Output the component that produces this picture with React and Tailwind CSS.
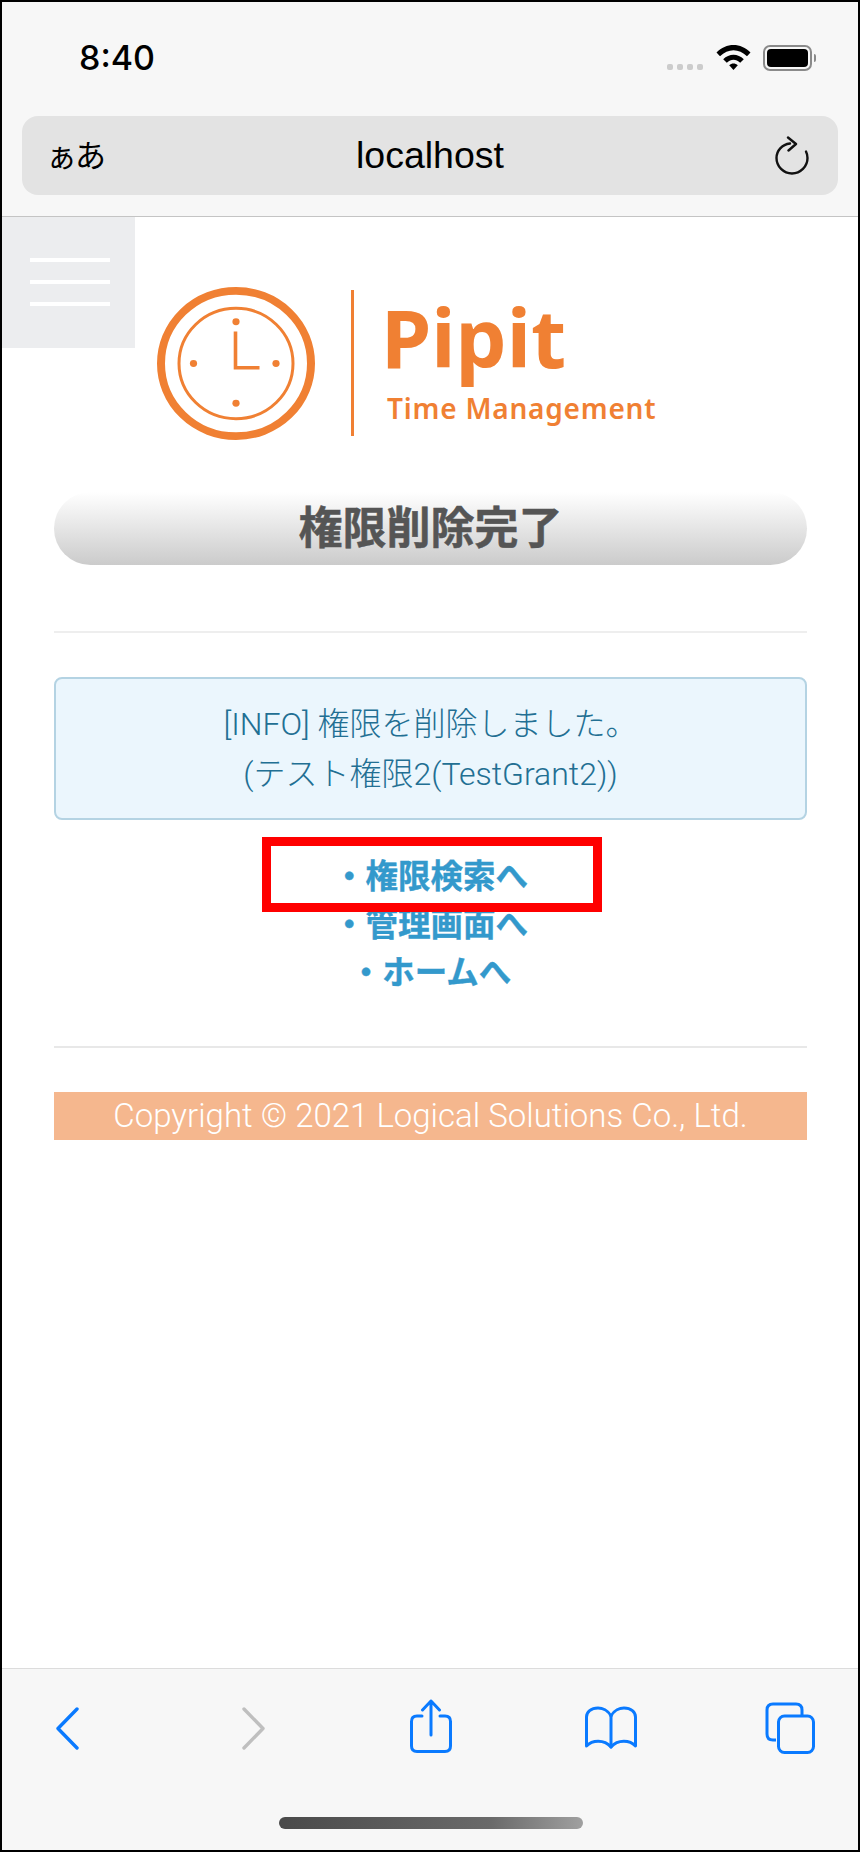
const orange = "#f08033";

function Clock() {
  return (
    <svg width="160" height="155" viewBox="0 0 160 160" preserveAspectRatio="none" className="shrink-0">
      <circle cx="80" cy="80" r="75" fill="none" stroke={orange} strokeWidth="8" />
      <circle cx="80" cy="80" r="57" fill="none" stroke={orange} strokeWidth="3" />
      <circle cx="80" cy="37" r="3.6" fill={orange} />
      <circle cx="80" cy="121" r="3.6" fill={orange} />
      <circle cx="37.5" cy="80" r="3.6" fill={orange} />
      <circle cx="120" cy="80" r="3.6" fill={orange} />
      <path d="M79.5 47V84.5H103.5" fill="none" stroke={orange} strokeWidth="3.6" />
    </svg>
  );
}

function Wifi() {
  return (
    <svg width="35" height="26" viewBox="0 0 35 26">
      <path d="M0.5 8.5C10 -1.5 25 -1.5 34.5 8.5L31 12.2C23 4.2 12 4.2 4 12.2Z" fill="#000" />
      <path d="M7.2 15.2C13 9.2 22 9.2 27.8 15.2L24.2 18.8C20 14.8 15 14.8 10.8 18.8Z" fill="#000" />
      <path d="M13.2 21.2C15.8 18.8 19.2 18.8 21.8 21.2L17.5 26Z" fill="#000" />
    </svg>
  );
}

function Battery() {
  return (
    <div className="flex items-center">
      <div className="h-[26px] w-[49px] rounded-[7px] border-2 border-[#8a8a8a] p-[2px]">
        <div className="h-full w-full rounded-[4px] bg-black" />
      </div>
      <div className="ml-[2px] h-[8px] w-[2px] rounded-r-full bg-[#8a8a8a]" />
    </div>
  );
}

function Reload() {
  return (
    <svg width="34" height="39" viewBox="0 0 34 39" fill="none" stroke="#111" strokeWidth="2.4" strokeLinecap="round" strokeLinejoin="round">
      <path d="M15 7.5C7 8.5 1.500 14.500 1.500 22C1.500 30.500 8.500 37.500 17 37.500C25.500 37.500 32.500 30.500 32.500 22C32.500 19.500 32 17.500 31 15.500" />
      <path d="M13 1.500L21 8L13.500 14.500" />
    </svg>
  );
}

function Toolbar() {
  const blue = "#0a7aff";
  return (
    <div className="flex h-[182px] flex-col border-t border-[#dcdcdc] bg-[#f7f7f7]">
      <div className="relative h-[148px]">
        <svg className="absolute left-[53px] top-[38px]" width="26" height="43" viewBox="0 0 26 43" fill="none" stroke={blue} strokeWidth="3.4" strokeLinecap="round" strokeLinejoin="round">
          <path d="M22 2L3 21.500L22 41" />
        </svg>
        <svg className="absolute left-[238px] top-[38px]" width="26" height="43" viewBox="0 0 26 43" fill="none" stroke="#bfbfbf" strokeWidth="3.4" strokeLinecap="round" strokeLinejoin="round">
          <path d="M4 2L23 21.500L4 41" />
        </svg>
        <svg className="absolute left-[408px] top-[30px]" width="42" height="54" viewBox="0 0 42 54" fill="none" stroke={blue} strokeWidth="3" strokeLinecap="round" strokeLinejoin="round">
          <path d="M12 17H7C3.500 17 1.500 19 1.500 22.500V47C1.500 50.500 3.500 52.500 7 52.500H35C38.500 52.500 40.500 50.500 40.500 47V22.500C40.500 19 38.500 17 35 17H30" />
          <path d="M21 36V2M12.500 11L21 2L29.500 11" />
        </svg>
        <svg className="absolute left-[582px] top-[37px]" width="54" height="44" viewBox="0 0 54 44" fill="none" stroke={blue} strokeWidth="3" strokeLinecap="round" strokeLinejoin="round">
          <path d="M27 10C24 4 18 2 14 2C7 2 2.500 6 2.500 11V40C8 34 20 33 27 41C34 33 46 34 51.500 40V11C51.500 6 47 2 40 2C36 2 30 4 27 10Z" />
          <path d="M27 10V41" />
        </svg>
        <svg className="absolute left-[763px] top-[33px]" width="50" height="52" viewBox="0 0 50 52" fill="none" stroke={blue} strokeWidth="3" strokeLinejoin="round">
          <path d="M11 38H8C4 38 2 36 2 32V8C2 4 4 2 8 2H31C35 2 37 4 37 8V14" />
          <rect x="13.500" y="14" width="35" height="36.500" rx="6" />
        </svg>
      </div>
      <div className="flex justify-center pl-[2px]">
        <div className="h-[12px] w-[304px] rounded-full bg-[linear-gradient(90deg,#4a4a4a_0%,#6a6a6a_70%,#a0a0a0_100%)]" />
      </div>
    </div>
  );
}

export default function App() {
  const jp = "font-['Inter','Noto_Sans_CJK_JP',sans-serif]";
  const body = "font-['Liberation_Sans','Noto_Sans_CJK_JP',sans-serif]";
  const light = "font-['Roboto','Noto_Sans_CJK_JP',sans-serif]";
  return (
    <div className={`flex h-[1852px] w-[860px] flex-col border-2 border-black bg-white ${jp}`}>
      <div className="h-[215px] shrink-0 border-b border-[#c4c4c4] bg-[#f7f7f7] px-[20px]">
        <div className="flex h-[114px] items-start justify-between">
          <div className="mt-[36px] pl-[57px] text-[34px] font-medium leading-[40px] text-black">8:40</div>
          <div className="mt-[42px] flex items-start">
            <div className="mt-[20px] flex gap-[4px]">
              <div className="h-[6px] w-[6px] rounded-[2px] bg-[#cccccc]" />
              <div className="h-[6px] w-[6px] rounded-[2px] bg-[#cccccc]" />
              <div className="h-[6px] w-[6px] rounded-[2px] bg-[#cccccc]" />
              <div className="h-[6px] w-[6px] rounded-[2px] bg-[#cccccc]" />
            </div>
            <div className="ml-[13px]"><Wifi /></div>
            <div className="ml-[12px] mt-[1px] mr-[22px]"><Battery /></div>
          </div>
        </div>
        <div className="grid h-[79px] grid-cols-3 items-center rounded-[16px] bg-[#e3e3e3] px-[29px]">
          <div className="ml-[-5px] text-[31px] leading-none tracking-[-2px] text-black">ぁあ</div>
          <div className={`text-center text-[37.5px] leading-none text-black ${body}`}>localhost</div>
          <div className="flex justify-end"><Reload /></div>
        </div>
      </div>

      <div className="relative flex-1 pl-[52px] pr-[51px]">
        <div className="absolute left-0 top-0 flex h-[131px] w-[133px] flex-col gap-[18px] bg-[#ecedef] pl-[28px] pr-[25px] pt-[41px]">
          <div className="h-[4px] bg-white" />
          <div className="h-[4px] bg-white" />
          <div className="h-[4px] bg-white" />
        </div>

        <div className="flex h-[275px] items-start pl-[102px] pt-[69px]">
          <Clock />
          <div className="ml-[35px] mt-[4px] h-[146px] w-[3px] bg-[#f08033]" />
          <div className="ml-[27px] flex flex-col font-['Noto_Sans','Noto_Sans_CJK_JP',sans-serif] text-[#f08033]">
            <div className="mt-[6px] text-[81px] font-bold leading-[90px]">Pipit</div>
            <div className="ml-[6px] mt-[8px] text-[28px] font-semibold leading-[36px] tracking-[0.8px]">Time Management</div>
          </div>
        </div>

        <div className={`flex h-[73px] items-center justify-center rounded-full bg-[linear-gradient(180deg,#ffffff_0%,#cbcbcb_100%)] text-[44px] font-bold text-[#555555] [-webkit-text-stroke:0.5px_#555555] ${body}`}>
          権限削除完了
        </div>

        <div className="mt-[66px] h-[2px] bg-[#eeeeee]" />

        <div className={`mt-[44px] flex h-[143px] flex-col items-center justify-center rounded-[8px] border-2 border-[#b4d3e3] bg-[#ebf6fd] text-[32px] font-light leading-[50px] text-[#226f93] ${light}`}>
          <div>[INFO] 権限を削除しました。</div>
          <div>(テスト権限2(TestGrant2))</div>
        </div>

        <div className={`relative mt-[33px] flex flex-col items-center text-[32.5px] font-bold leading-[48px] text-[#3399cc] [-webkit-text-stroke:0.4px_#3399cc] ${body}`}>
          <div>・権限検索へ</div>
          <div>・管理画面へ</div>
          <div>・ホームへ</div>
          <div className="absolute left-[208px] top-[-16px] h-[75px] w-[340px] border-[9px] border-[#ff0000]" />
        </div>

        <div className="mt-[49px] h-[2px] bg-[#e8e8e8]" />

        <div className={`mt-[44px] flex h-[48px] items-center justify-center bg-[#f5b78e] text-[33px] font-light text-white ${light}`}>
          Copyright © 2021 Logical Solutions Co., Ltd.
        </div>
      </div>

      <Toolbar />
    </div>
  );
}
